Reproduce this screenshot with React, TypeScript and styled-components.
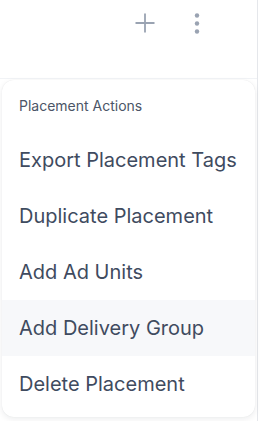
import styled, { createGlobalStyle } from "styled-components";

const Global = createGlobalStyle`
  html, body {
    margin: 0;
    padding: 0;
    background: #ffffff;
    font-family: Inter, "Noto Sans", sans-serif;
  }
`;

const Panel = styled.div`
  width: 257px;
  height: 421px;
  border-right: 1px solid #e5e7eb;
  background: #ffffff;
  display: flex;
  flex-direction: column;
`;

const Header = styled.div`
  height: 79px;
  flex-shrink: 0;
  border-bottom: 1px solid #f1f3f6;
  display: flex;
  align-items: flex-start;
  justify-content: flex-end;
  padding: 10px 47px 0 0;
  gap: 26px;
  box-sizing: border-box;
`;

const IconButton = styled.button`
  border: none;
  background: none;
  padding: 0;
  width: 26px;
  height: 26px;
  display: flex;
  align-items: center;
  justify-content: center;
  color: #9aa3b2;
  cursor: pointer;
`;

const Menu = styled.div`
  margin: 1px 2px 0 2px;
  height: 337px;
  border-radius: 12px;
  background: #ffffff;
  box-shadow: 0 2px 6px rgba(15, 23, 42, 0.08), 0 0 1px rgba(15, 23, 42, 0.1);
  overflow: hidden;
  display: flex;
  flex-direction: column;
`;

const MenuLabel = styled.div`
  height: 52px;
  flex-shrink: 0;
  padding: 17px 0 0 17px;
  box-sizing: border-box;
  font-size: 14px;
  color: #4b5567;
`;

const MenuItem = styled.div<{ $active?: boolean }>`
  height: 56px;
  flex-shrink: 0;
  display: flex;
  align-items: center;
  padding-left: 17px;
  font-size: 20px;
  color: #3f4b5f;
  background: ${(p) => (p.$active ? "#f7f8fa" : "transparent")};
  cursor: pointer;
`;

const items = [
  "Export Placement Tags",
  "Duplicate Placement",
  "Add Ad Units",
  "Add Delivery Group",
  "Delete Placement",
];

export default function App() {
  return (
    <>
      <Global />
      <Panel>
        <Header>
          <IconButton aria-label="Add">
            <svg width="22" height="22" viewBox="0 0 22 22" fill="none" stroke="currentColor" strokeWidth="1.8">
              <path d="M11 1.5v19M1.5 11h19" />
            </svg>
          </IconButton>
          <IconButton aria-label="More">
            <svg width="6" height="22" viewBox="0 0 6 22" fill="currentColor">
              <circle cx="3" cy="3.5" r="2.2" />
              <circle cx="3" cy="11.5" r="2.2" />
              <circle cx="3" cy="19.5" r="2.2" />
            </svg>
          </IconButton>
        </Header>
        <Menu>
          <MenuLabel>Placement Actions</MenuLabel>
          {items.map((label) => (
            <MenuItem key={label} $active={label === "Add Delivery Group"}>
              {label}
            </MenuItem>
          ))}
        </Menu>
      </Panel>
    </>
  );
}
